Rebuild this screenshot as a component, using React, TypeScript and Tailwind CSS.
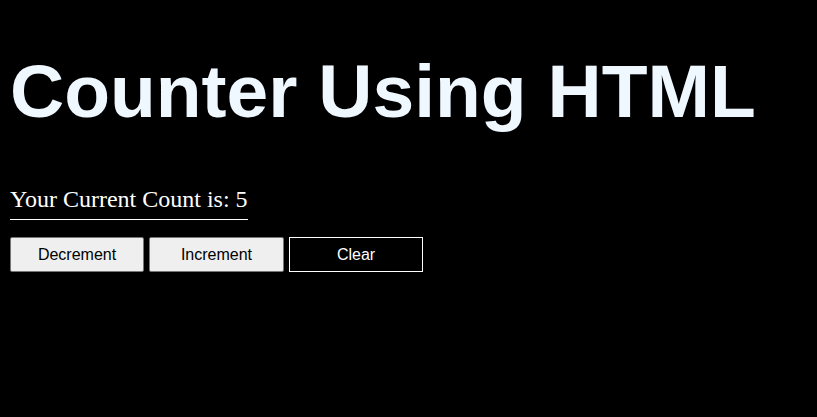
import { useState } from "react";

export default function App() {
  const [count, setCount] = useState(5);

  return (
    <div className="min-h-screen bg-black px-[10px] pt-[49px] font-['Liberation_Sans',Arial,sans-serif]">
      {/* Title */}
      <h1 className="text-[75px] leading-[84px] font-bold text-[#f0f8ff]">
        Counter Using HTML
      </h1>

      {/* Count */}
      <div className="mt-[52px]">
        <p className="inline-block border-b border-white pb-[6px] text-[24px] leading-[28px] text-white font-['Liberation_Serif','Times_New_Roman',serif]">
          Your Current Count is: {count}
        </p>
      </div>

      {/* Buttons */}
      <div className="mt-[17px] flex gap-[5px]">
        <button
          onClick={() => setCount(count - 1)}
          className="h-[35px] w-[134px] rounded-[2px] border border-[#767676] bg-[#efefef] text-[16px] text-black"
        >
          Decrement
        </button>
        <button
          onClick={() => setCount(count + 1)}
          className="h-[35px] w-[135px] rounded-[2px] border border-[#767676] bg-[#efefef] text-[16px] text-black"
        >
          Increment
        </button>
        <button
          onClick={() => setCount(0)}
          className="h-[35px] w-[134px] border border-white bg-black text-[16px] text-white"
        >
          Clear
        </button>
      </div>
    </div>
  );
}
